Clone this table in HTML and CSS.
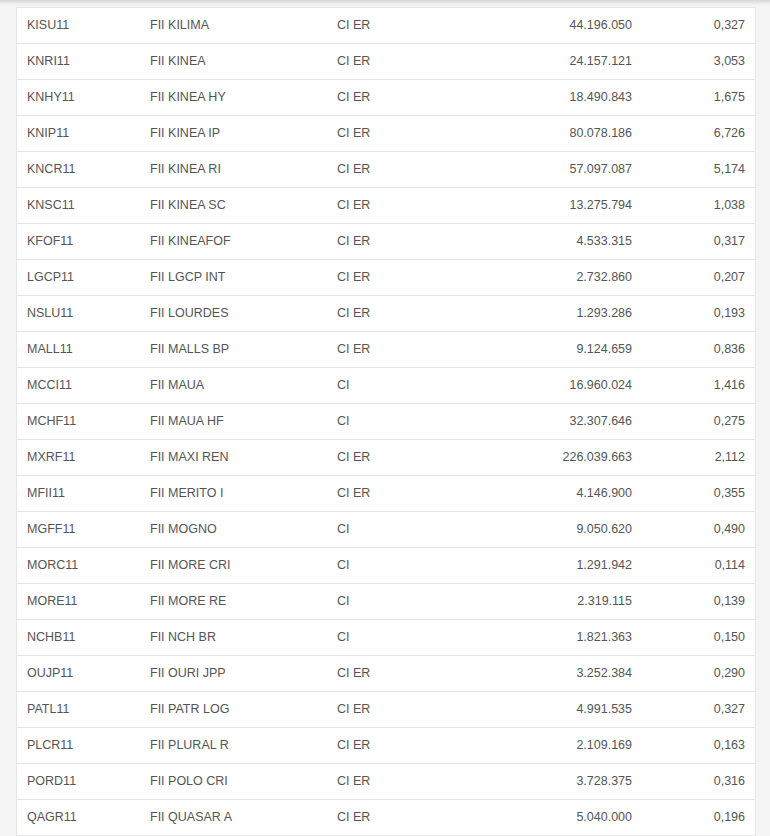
FILE: index.html
```html
<!DOCTYPE html>
<html>
<head>
<meta charset="utf-8">
<link rel="stylesheet" href="styles.css">
</head>
<body>
<div class="shade"></div>
<div class="table">
  <div class="row"><span>KISU11</span><span>FII KILIMA</span><span>CI ER</span><span class="num">44.196.050</span><span class="num">0,327</span></div>
  <div class="row"><span>KNRI11</span><span>FII KINEA</span><span>CI ER</span><span class="num">24.157.121</span><span class="num">3,053</span></div>
  <div class="row"><span>KNHY11</span><span>FII KINEA HY</span><span>CI ER</span><span class="num">18.490.843</span><span class="num">1,675</span></div>
  <div class="row"><span>KNIP11</span><span>FII KINEA IP</span><span>CI ER</span><span class="num">80.078.186</span><span class="num">6,726</span></div>
  <div class="row"><span>KNCR11</span><span>FII KINEA RI</span><span>CI ER</span><span class="num">57.097.087</span><span class="num">5,174</span></div>
  <div class="row"><span>KNSC11</span><span>FII KINEA SC</span><span>CI ER</span><span class="num">13.275.794</span><span class="num">1,038</span></div>
  <div class="row"><span>KFOF11</span><span>FII KINEAFOF</span><span>CI ER</span><span class="num">4.533.315</span><span class="num">0,317</span></div>
  <div class="row"><span>LGCP11</span><span>FII LGCP INT</span><span>CI ER</span><span class="num">2.732.860</span><span class="num">0,207</span></div>
  <div class="row"><span>NSLU11</span><span>FII LOURDES</span><span>CI ER</span><span class="num">1.293.286</span><span class="num">0,193</span></div>
  <div class="row"><span>MALL11</span><span>FII MALLS BP</span><span>CI ER</span><span class="num">9.124.659</span><span class="num">0,836</span></div>
  <div class="row"><span>MCCI11</span><span>FII MAUA</span><span>CI</span><span class="num">16.960.024</span><span class="num">1,416</span></div>
  <div class="row"><span>MCHF11</span><span>FII MAUA HF</span><span>CI</span><span class="num">32.307.646</span><span class="num">0,275</span></div>
  <div class="row"><span>MXRF11</span><span>FII MAXI REN</span><span>CI ER</span><span class="num">226.039.663</span><span class="num">2,112</span></div>
  <div class="row"><span>MFII11</span><span>FII MERITO I</span><span>CI ER</span><span class="num">4.146.900</span><span class="num">0,355</span></div>
  <div class="row"><span>MGFF11</span><span>FII MOGNO</span><span>CI</span><span class="num">9.050.620</span><span class="num">0,490</span></div>
  <div class="row"><span>MORC11</span><span>FII MORE CRI</span><span>CI</span><span class="num">1.291.942</span><span class="num">0,114</span></div>
  <div class="row"><span>MORE11</span><span>FII MORE RE</span><span>CI</span><span class="num">2.319.115</span><span class="num">0,139</span></div>
  <div class="row"><span>NCHB11</span><span>FII NCH BR</span><span>CI</span><span class="num">1.821.363</span><span class="num">0,150</span></div>
  <div class="row"><span>OUJP11</span><span>FII OURI JPP</span><span>CI ER</span><span class="num">3.252.384</span><span class="num">0,290</span></div>
  <div class="row"><span>PATL11</span><span>FII PATR LOG</span><span>CI ER</span><span class="num">4.991.535</span><span class="num">0,327</span></div>
  <div class="row"><span>PLCR11</span><span>FII PLURAL R</span><span>CI ER</span><span class="num">2.109.169</span><span class="num">0,163</span></div>
  <div class="row"><span>PORD11</span><span>FII POLO CRI</span><span>CI ER</span><span class="num">3.728.375</span><span class="num">0,316</span></div>
  <div class="row"><span>QAGR11</span><span>FII QUASAR A</span><span>CI ER</span><span class="num">5.040.000</span><span class="num">0,196</span></div>
</div>
</body>
</html>
```
FILE: styles.css
```css
html, body {
  margin: 0;
  padding: 0;
  background: #f5f5f5;
  font-family: "Liberation Sans", Arial, sans-serif;
  font-size: 12.5px;
  color: #555;
  overflow: hidden;
}
.shade {
  height: 7px;
  background: linear-gradient(#d6d6d6, #f0f0f0 60%, #f5f5f5);
}
.table {
  margin-left: 16px;
  width: 738px;
  background: #fff;
  border: 1px solid #e6e6e6;
}
.row {
  display: grid;
  grid-template-columns: 123px 187px 173px 142px 113px;
  height: 35px;
  align-items: center;
  border-top: 1px solid #e6e6e6;
}
.row:first-child {
  border-top: none;
}
.row span {
  padding: 0 10px 2px;
  white-space: nowrap;
}
.row .num {
  text-align: right;
}
```
